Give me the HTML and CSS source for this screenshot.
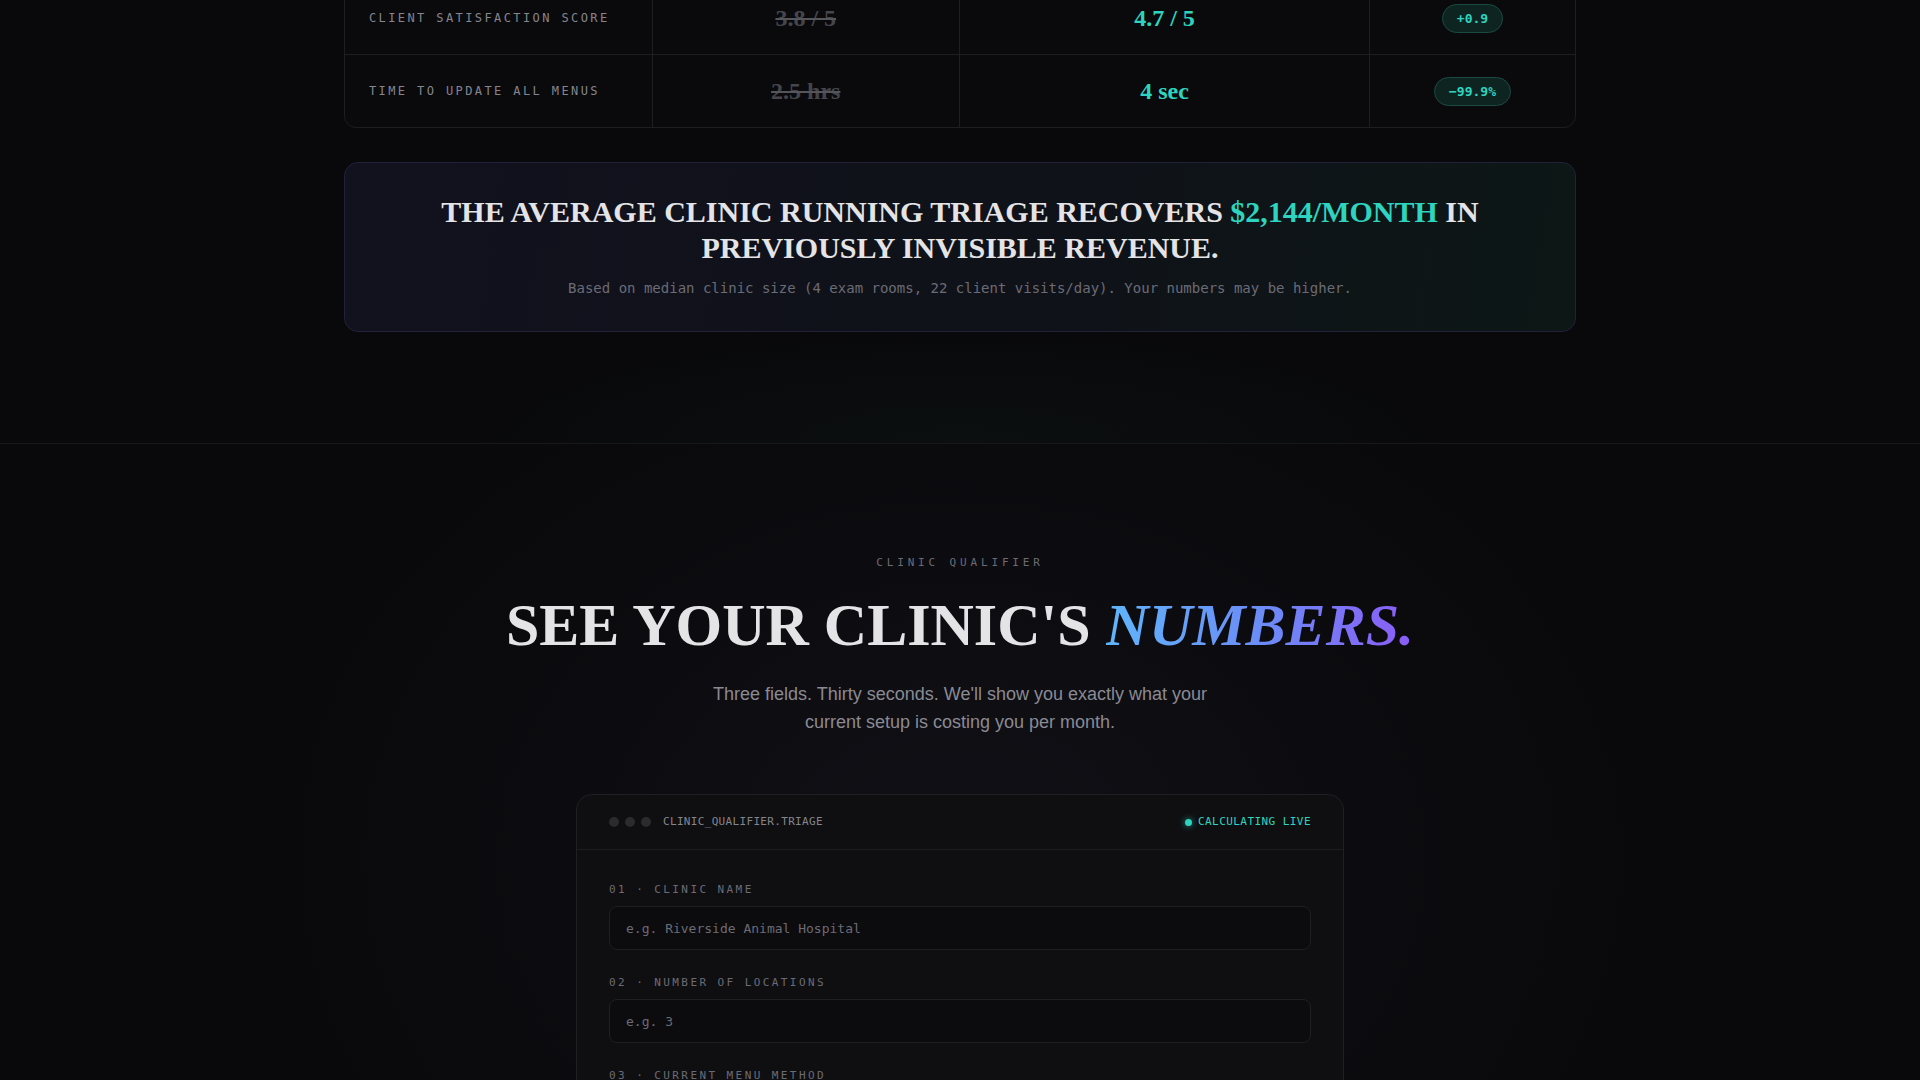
FILE: index.html
```html
<!DOCTYPE html>
<html lang="en">
<head>
<meta charset="utf-8">
<title>Triage — Clinic Qualifier</title>
<link rel="stylesheet" href="styles.css">
</head>
<body>
<section class="compare">
  <div class="container">
    <div class="table">
      <div class="row">
        <div class="cell label">CLIENT SATISFACTION SCORE</div>
        <div class="cell old">3.8 / 5</div>
        <div class="cell new">4.7 / 5</div>
        <div class="cell delta"><span class="badge">+0.9</span></div>
      </div>
      <div class="row">
        <div class="cell label">TIME TO UPDATE ALL MENUS</div>
        <div class="cell old">2.5 hrs</div>
        <div class="cell new">4 sec</div>
        <div class="cell delta"><span class="badge">−99.9%</span></div>
      </div>
    </div>
    <div class="banner">
      <h3 class="banner-title">THE AVERAGE CLINIC RUNNING TRIAGE RECOVERS <span class="teal">$2,144/MONTH</span> IN PREVIOUSLY INVISIBLE REVENUE.</h3>
      <p class="banner-note">Based on median clinic size (4 exam rooms, 22 client visits/day). Your numbers may be higher.</p>
    </div>
  </div>
</section>

<section class="qualifier">
  <div class="eyebrow">CLINIC QUALIFIER</div>
  <h2 class="headline">SEE YOUR CLINIC'S <em class="grad">NUMBERS.</em></h2>
  <p class="lede">Three fields. Thirty seconds. We'll show you exactly what your current setup is costing you per month.</p>

  <div class="card">
    <div class="card-head">
      <div class="head-left">
        <span class="dot"></span><span class="dot"></span><span class="dot"></span>
        <span class="file">CLINIC_QUALIFIER.TRIAGE</span>
      </div>
      <div class="live"><span class="live-dot"></span>CALCULATING LIVE</div>
    </div>
    <div class="card-body">
      <div class="field">
        <label class="field-label">01 · CLINIC NAME</label>
        <div class="input">e.g. Riverside Animal Hospital</div>
      </div>
      <div class="field">
        <label class="field-label">02 · NUMBER OF LOCATIONS</label>
        <div class="input">e.g. 3</div>
      </div>
      <div class="field">
        <label class="field-label">03 · CURRENT MENU METHOD</label>
        <div class="input">Select one</div>
      </div>
    </div>
  </div>
</section>
</body>
</html>
```

FILE: styles.css
```css
* { box-sizing: border-box; }
html, body { margin: 0; padding: 0; }
body {
  background: #09090b;
  color: #d4d4d8;
  font-family: "Liberation Sans", Arial, sans-serif;
  overflow: hidden;
}

.compare {
  padding-bottom: 111px;
  border-bottom: 1px solid #18181c;
  background: radial-gradient(ellipse 700px 160px at 50% 100%, rgba(30, 60, 55, 0.12), transparent 70%);
}
.container {
  max-width: 1280px;
  margin: 0 auto;
  padding: 0 24px;
}

.table {
  margin-top: -19px;
  border: 1px solid #1e1e22;
  border-radius: 12px;
  overflow: hidden;
  background: #0a0a0c;
}
.row {
  display: grid;
  grid-template-columns: 1.5fr 1.5fr 2fr 1fr;
  height: 73px;
  border-bottom: 1px solid #1e1e22;
}
.row:last-child { border-bottom: 0; height: 72px; }
.cell {
  display: flex;
  align-items: center;
  border-right: 1px solid #1e1e22;
}
.cell:last-child { border-right: 0; }
.label {
  padding-left: 24px;
  font-family: "DejaVu Sans Mono", monospace;
  font-size: 12px;
  letter-spacing: 0.2em;
  color: #85858e;
}
.old, .new, .delta { justify-content: center; }
.old {
  font-family: "Liberation Serif", "Times New Roman", serif;
  font-weight: 700;
  font-size: 24px;
  color: #45454c;
  text-decoration: line-through;
  text-decoration-color: #55555c;
}
.new {
  font-family: "Liberation Serif", "Times New Roman", serif;
  font-weight: 700;
  font-size: 24px;
  color: #2dd4bf;
}
.badge {
  font-family: "DejaVu Sans Mono", monospace;
  font-weight: 700;
  font-size: 13px;
  color: #2dd4bf;
  padding: 6px 14px;
  border-radius: 999px;
  background: #0d2421;
  border: 1px solid #1b4a42;
}

.banner {
  margin-top: 34px;
  border: 1px solid #22213a;
  border-radius: 14px;
  background: linear-gradient(100deg, #12111e 0%, #0f1219 55%, #0d1716 100%);
  padding: 31px 48px 34px;
  text-align: center;
}
.banner-title {
  margin: 0 auto;
  font-family: "Liberation Serif", "Times New Roman", serif;
  font-weight: 700;
  font-size: 30px;
  line-height: 36px;
  color: #e4e4e7;
}
.teal { color: #2dd4bf; }
.banner-note {
  margin: 14px 0 0;
  font-family: "DejaVu Sans Mono", monospace;
  font-size: 14px;
  line-height: 17px;
  color: #6b6b75;
}

.qualifier {
  padding: 112px 24px 0;
  text-align: center;
  background: radial-gradient(ellipse 900px 700px at 50% 55%, #101016 0%, #0c0c10 45%, #09090b 80%);
  min-height: 700px;
}
.eyebrow {
  font-family: "DejaVu Sans Mono", monospace;
  font-size: 11px;
  line-height: 14px;
  letter-spacing: 0.35em;
  color: #6b6b75;
  margin-bottom: 22px;
}
.headline {
  margin: 0;
  font-family: "Liberation Serif", "Times New Roman", serif;
  font-weight: 700;
  font-size: 60px;
  line-height: 66px;
  color: #e4e4e7;
}
.grad {
  font-style: italic;
  background: linear-gradient(90deg, #60b5fa 0%, #6b8cf7 50%, #8b5cf6 100%);
  -webkit-background-clip: text;
  background-clip: text;
  color: transparent;
}
.lede {
  margin: 22px auto 0;
  max-width: 520px;
  font-size: 18px;
  line-height: 28px;
  color: #8a8a93;
}

.card {
  margin: 58px auto 0;
  max-width: 768px;
  text-align: left;
  background: #0f0f12;
  border: 1px solid #1f1f24;
  border-radius: 16px;
}
.card-head {
  display: flex;
  justify-content: space-between;
  align-items: center;
  padding: 20px 32px;
  border-bottom: 1px solid #1c1c21;
}
.head-left { display: flex; align-items: center; gap: 6px; }
.dot { width: 10px; height: 10px; border-radius: 50%; background: #2a2a2f; }
.file {
  margin-left: 6px;
  font-family: "DejaVu Sans Mono", monospace;
  font-size: 11px;
  line-height: 14px;
  letter-spacing: 0.03em;
  color: #85858e;
}
.live {
  display: flex;
  align-items: center;
  gap: 6px;
  font-family: "DejaVu Sans Mono", monospace;
  font-size: 11px;
  line-height: 14px;
  letter-spacing: 0.04em;
  color: #2dd4bf;
}
.live-dot {
  width: 7px; height: 7px; border-radius: 50%;
  background: #2dd4bf;
  box-shadow: 0 0 6px rgba(45, 212, 191, 0.7);
}
.card-body { padding: 33px 32px 40px; }
.field { margin-bottom: 26px; }
.field-label {
  display: block;
  font-family: "DejaVu Sans Mono", monospace;
  font-size: 11px;
  line-height: 14px;
  letter-spacing: 0.22em;
  color: #6b6b75;
  margin-bottom: 9px;
}
.input {
  height: 44px;
  display: flex;
  align-items: center;
  padding: 0 16px;
  background: #0c0c0f;
  border: 1px solid #1e1e23;
  border-radius: 8px;
  font-family: "DejaVu Sans Mono", monospace;
  font-size: 13px;
  color: #6b6b75;
}
```
